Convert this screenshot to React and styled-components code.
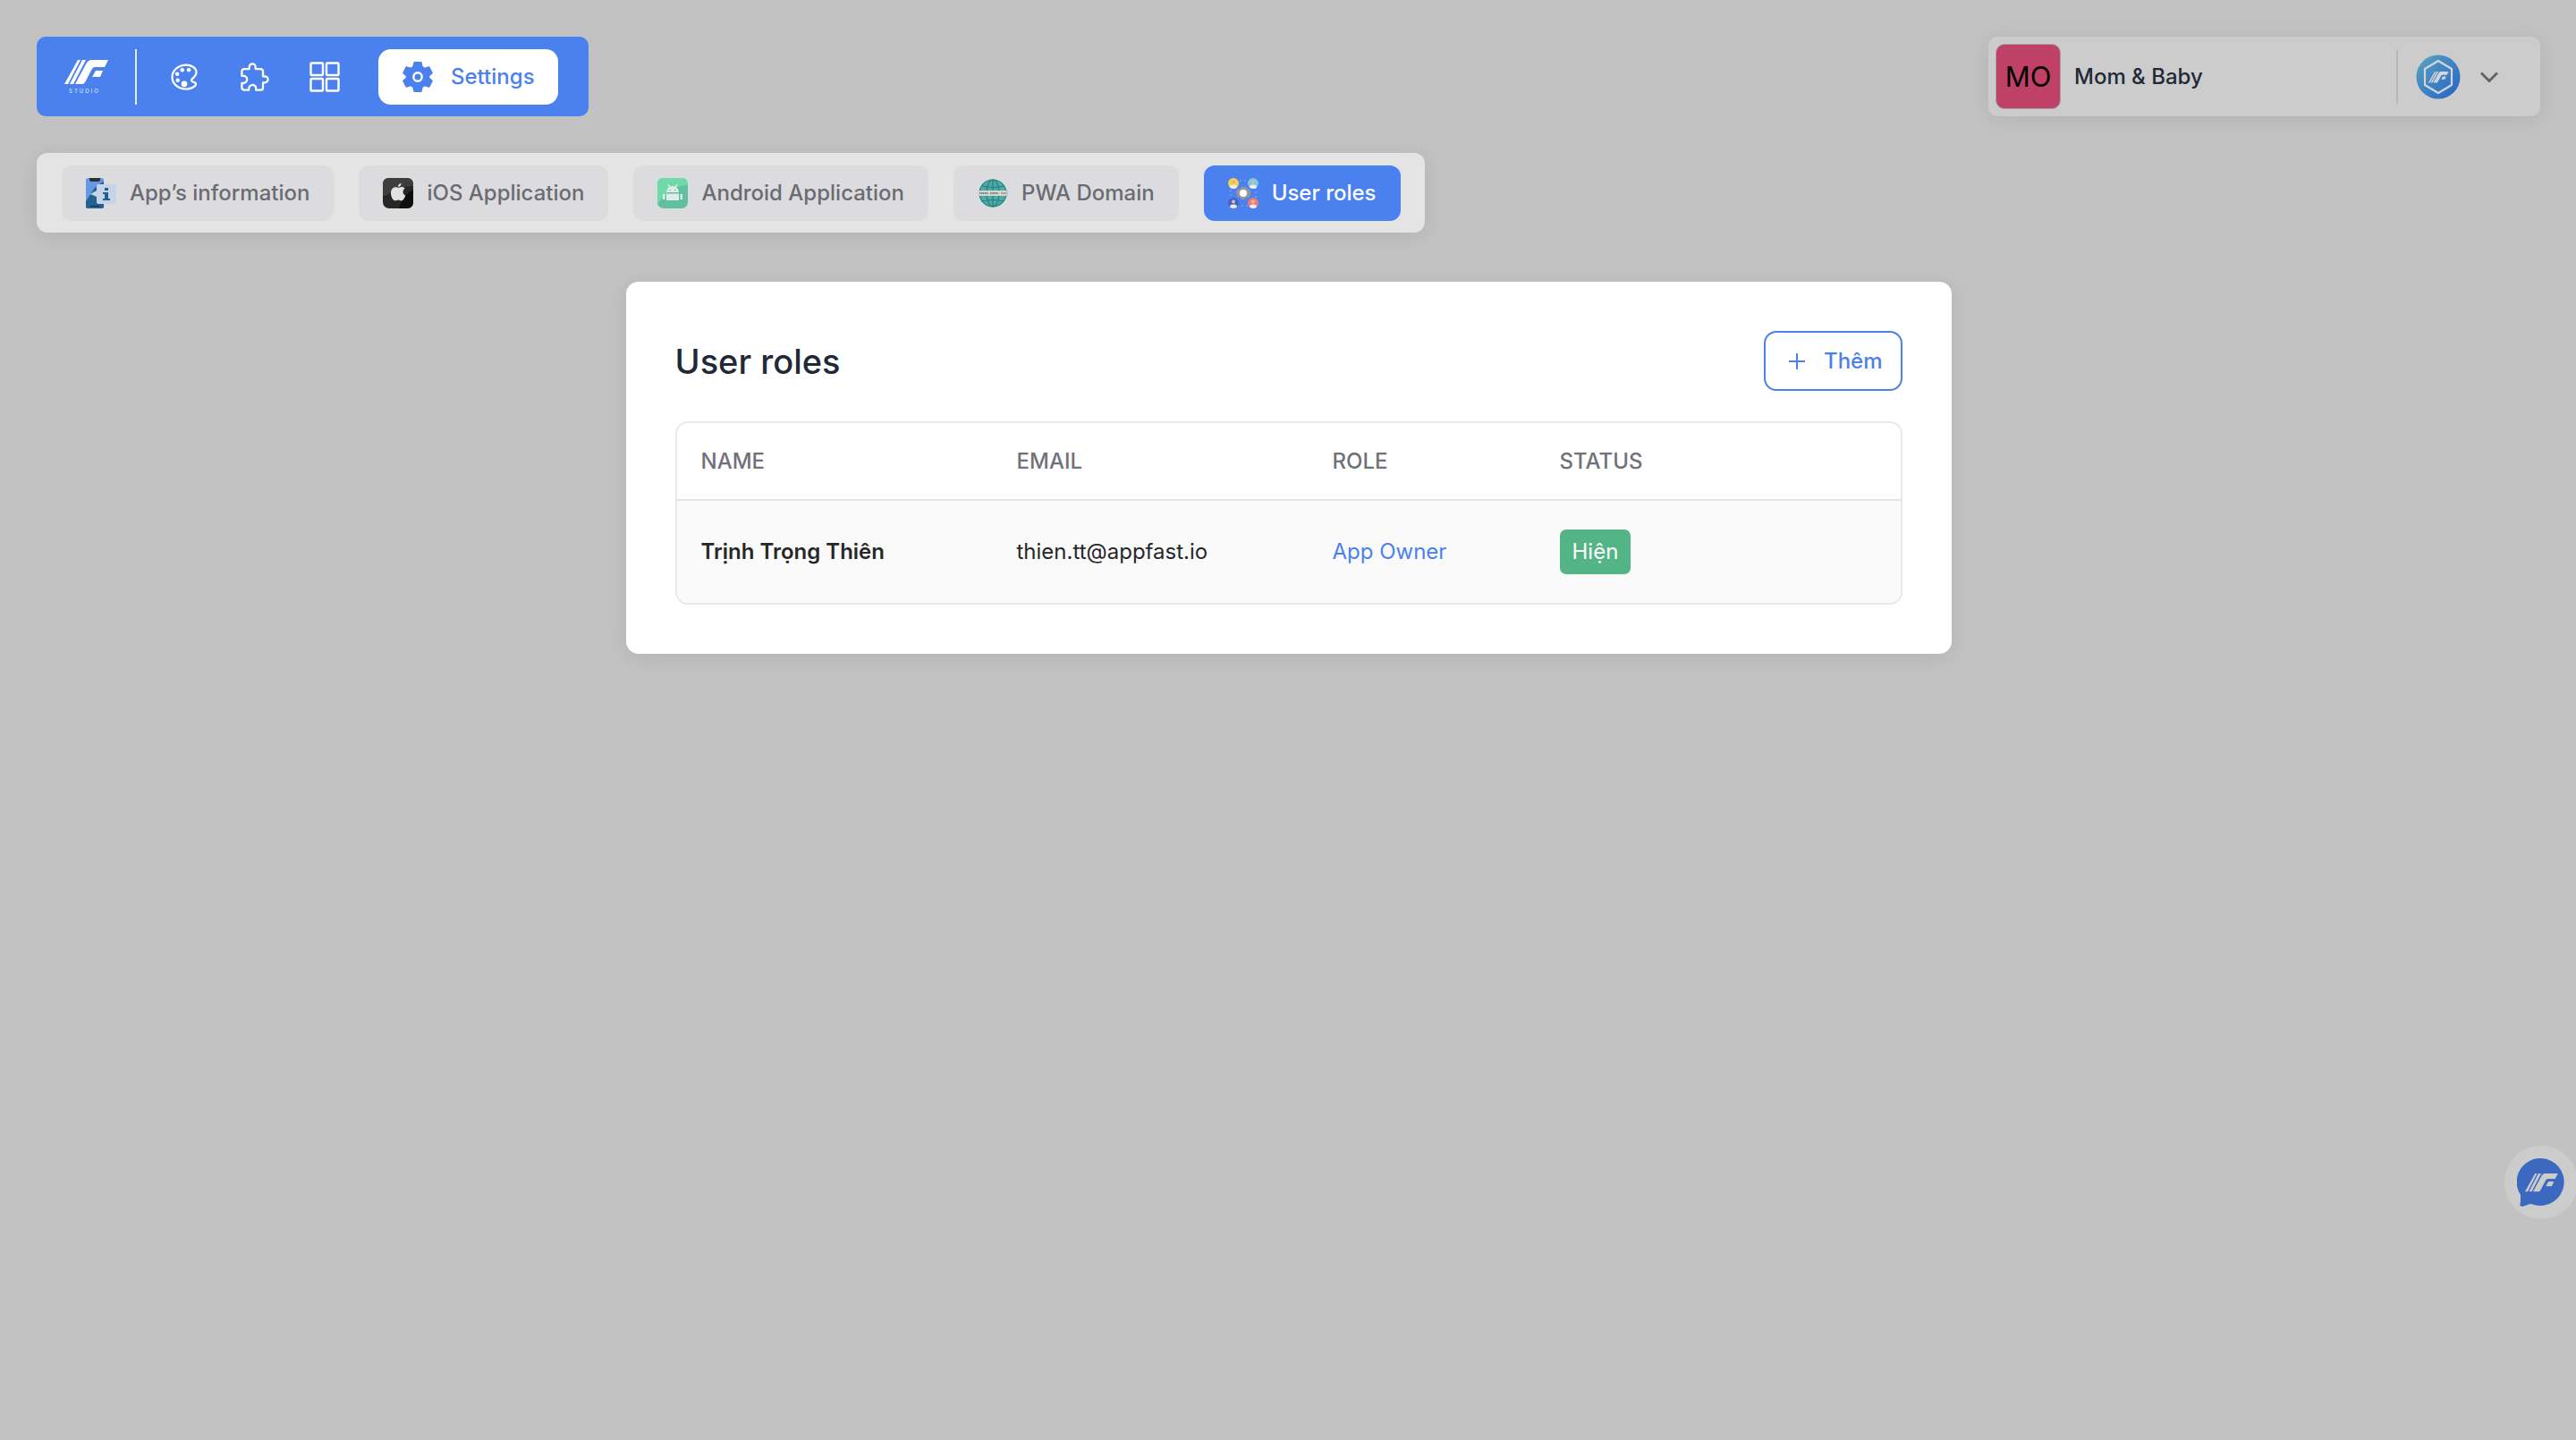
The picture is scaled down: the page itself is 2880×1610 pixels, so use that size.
import React from "react";
import styled, { createGlobalStyle } from "styled-components";
import { IoColorPaletteOutline, IoExtensionPuzzleOutline } from "react-icons/io5";

const GlobalStyle = createGlobalStyle`
  *, *::before, *::after { box-sizing: border-box; }
  body {
    margin: 0;
    background: #c2c2c2;
    color: #1f2937;
    font-family: Inter, "Noto Sans", sans-serif;
    font-size: 24px;
    line-height: 36px;
  }
  button { font: inherit; border: 0; background: none; padding: 0; cursor: pointer; }
  a { text-decoration: none; color: inherit; }
  svg { display: block; flex: none; }
`;

const Page = styled.div`
  min-height: 100vh;
  padding: 41px 40px 41px 41px;
`;

const TopBar = styled.header`
  display: flex;
  justify-content: space-between;
  align-items: center;
`;

const MainNav = styled.nav`
  display: flex;
  align-items: center;
  height: 89px;
  padding: 0 34px 0 28px;
  border-radius: 10px;
  background: #4a81ee;
  color: #fff;
`;

const LogoLink = styled.a`
  display: flex;
  padding: 0 28px 0 0;
`;

const Divider = styled.span`
  width: 2px;
  height: 62px;
  background: ${(p) => p.$color};
`;

const NavIcons = styled.div`
  display: flex;
  align-items: center;
  gap: 43px;
  padding: 0 43px 0 35px;
`;

const IconButton = styled.button`
  display: grid;
  place-items: center;
  color: #fff;
`;

const SettingsLink = styled.a`
  display: flex;
  align-items: center;
  gap: 20px;
  height: 62px;
  padding: 0 26px 0 27px;
  border-radius: 14px;
  background: #fff;
  color: #4a81ee;
  font-weight: 500;
`;

const AccountBar = styled.div`
  display: flex;
  align-items: center;
  width: 617px;
  height: 89px;
  padding: 0 45px 0 8px;
  border-radius: 10px;
  background: #cccccc;
  box-shadow: 0 4px 24px rgba(0, 0, 0, 0.08);
`;

const AppBadge = styled.span`
  display: grid;
  place-items: center;
  width: 73px;
  height: 73px;
  border: 1px solid #a3a3a8;
  border-radius: 10px;
  background: #bf4167;
  color: #000;
  font-size: 31px;
`;

const AppName = styled.span`
  flex: 1;
  padding-left: 15px;
  font-weight: 500;
`;

const AccountButton = styled.button`
  display: flex;
  align-items: center;
  gap: 20px;
  padding-left: 20px;
  color: #64646c;
`;

const TabBar = styled.nav`
  display: flex;
  align-items: center;
  gap: 28px;
  width: fit-content;
  height: 89px;
  margin-top: 41px;
  padding: 0 27px 0 28px;
  border-radius: 12px;
  background: #e4e4e4;
  box-shadow: 0 4px 24px rgba(0, 0, 0, 0.08);
`;

const Tab = styled.a`
  display: flex;
  align-items: center;
  gap: 15px;
  height: 62px;
  padding: 0 27px;
  border-radius: 12px;
  background: ${(p) => (p.$active ? "#4a81ee" : "#dcdcde")};
  color: ${(p) => (p.$active ? "#fff" : "#6b6b74")};
  font-weight: 500;
`;

const Card = styled.main`
  width: 100%;
  max-width: 1482px;
  margin: 55px auto 0;
  padding: 55px;
  border-radius: 14px;
  background: #fff;
  box-shadow: 0 4px 24px rgba(0, 0, 0, 0.08);
`;

const CardHeader = styled.div`
  display: flex;
  justify-content: space-between;
  align-items: center;
  margin-bottom: 34px;
`;

const Title = styled.h1`
  margin: 0;
  font-size: 38px;
  line-height: 48px;
  font-weight: 500;
`;

const AddButton = styled.button`
  display: flex;
  align-items: center;
  gap: 20px;
  height: 67px;
  padding: 0 20px 0 25px;
  border: 2px solid #4a81ee;
  border-radius: 14px;
  color: #4a81ee;
  font-weight: 500;
`;

const TableFrame = styled.div`
  border: 2px solid #e9e9ec;
  border-radius: 14px;
  overflow: hidden;
`;

const Table = styled.table`
  width: 100%;
  table-layout: fixed;
  border-collapse: collapse;
  text-align: left;
`;

const HeadCell = styled.th`
  width: ${(p) => p.$width};
  height: 86px;
  padding: 0 27px;
  border-bottom: 2px solid #e5e5e9;
  color: #71717a;
  font-weight: 500;
`;

const Cell = styled.td`
  height: 115px;
  padding: 0 27px;
  background: #fafafa;
  color: ${(p) => p.$color || "#27272a"};
  font-weight: ${(p) => (p.$strong ? 600 : 400)};
`;

const Status = styled.span`
  display: inline-block;
  padding: 7px 14px;
  border-radius: 7px;
  background: #53b586;
  color: #fff;
`;

const ChatButton = styled.button`
  position: fixed;
  right: -2px;
  bottom: 247px;
  display: grid;
  place-items: center;
  width: 82px;
  height: 82px;
  border-radius: 50%;
  background: #cccccc;
`;

const MarkShape = () => (
  <>
    <path d="M15 0h3L4 27H0z" />
    <path d="M20 0h4L10 27H6z" />
    <path d="M30 0h19l-4 8H34q-2 0-3 2l-8 15q-1 2-3 2h-8L25 3q2-3 5-3z" />
    <path d="M35 12h8l-3 7h-9z" />
  </>
);

const LogoText = styled.text`
  font: 500 6px Inter, sans-serif;
  letter-spacing: 2px;
`;

const Logo = () => (
  <svg width="54" height="40" viewBox="0 0 54 40" fill="#fff" role="img" aria-label="Studio">
    <g transform="translate(3 1)"><MarkShape /></g>
    <LogoText x="8" y="38" opacity=".75">STUDIO</LogoText>
  </svg>
);

const GridIcon = () => (
  <svg width="34" height="34" viewBox="0 0 34 34" fill="none" stroke="#fff" strokeWidth="2.4">
    <rect x="1.5" y="1.5" width="13.5" height="13.5" rx="1" />
    <rect x="19" y="1.5" width="13.5" height="13.5" rx="1" />
    <rect x="1.5" y="19" width="13.5" height="13.5" rx="1" />
    <rect x="19" y="19" width="13.5" height="13.5" rx="1" />
  </svg>
);

const GearIcon = () => (
  <svg width="34" height="34" viewBox="0 0 34 34">
    <path fill="#4a81ee" stroke="#4a81ee" strokeWidth="2.5" strokeLinejoin="round" d="M13.500 1.300h7l1 4.700 3.500 2 4.500-1.500 3 6-3.500 3v3l3.500 3-3 6-4.500-1.500-3.500 2-1 4.700h-7l-1-4.700-3.500-2-4.500 1.500-3-6 3.500-3v-3l-3.500-3 3-6L9 8l3.500-2z" />
    <circle cx="17" cy="17" r="4.700" fill="none" stroke="#fff" strokeWidth="2.400" />
  </svg>
);

const InfoIcon = () => (
  <svg width="34" height="34" viewBox="0 0 34 34">
    <rect width="20" height="34" rx="2.500" fill="#659ae2" />
    <path d="M20 4C8 9 5 20 0 26v6q0 2 2 2h16q2 0 2-2z" fill="#23618f" />
    <path d="M4 0h12v2q0 2-2 2H6Q4 4 4 2z" fill="#2b2f38" />
    <path d="M5 31h10v1H5z" fill="#172a45" />
    <path d="M14 7h18q2 0 2 2v18q0 2-2 2H14q-2 0-2-2v-6l-7-3 7-4V9q0-2 2-2z" fill="#c6d3e8" />
    <path d="M21 11h4v3h-4zM19 16h6v7h2v2h-8v-2h2v-5h-2z" fill="#23618f" />
  </svg>
);

const AppleIcon = () => (
  <svg width="34" height="34" viewBox="0 0 34 34">
    <rect width="34" height="34" rx="7" fill="#262626" />
    <path d="M7 0h20q7 0 7 7v2Q18 8 3 20H0V7q0-7 7-7z" fill="#3e3e3e" />
    <path d="M34 13v14q0 7-7 7h-9q3-14 16-21z" fill="#0e0e0e" />
    <path fill="#e2e2e2" d="M17.500 11c1-.1 2-1.200 4-1 1.500.1 2.500.9 3.200 1.800-3.200 2-2.700 6.500.6 7.900-.8 2.300-2.600 5.700-4.700 5.700-1.400 0-1.800-.8-3.400-.8s-2.100.8-3.400.8C11.300 25.400 9 20.900 9 17.100c0-4.500 2.700-6.800 5.200-6.800 1.400 0 2.500.7 3.300.7zM17 10c-.2-2.300 1.500-4 3.500-4.300C20.800 8 19.200 9.800 17 10z" />
  </svg>
);

const AndroidIcon = () => (
  <svg width="34" height="34" viewBox="0 0 34 34">
    <rect width="34" height="34" rx="7" fill="#5fbf9e" />
    <path d="M7 0h20q7 0 7 7v1Q14 9 2 27l-2 1V7q0-7 7-7z" fill="#6fd9a8" />
    <path fill="#e0ece7" d="M10 16a7 7 0 0 1 14 0zM10 17.500h14V25H10zM6 18h2.500v6H6zM25.500 18H28v6h-2.500z" />
    <path d="M12 7l2 4M22 7l-2 4" stroke="#e0ece7" strokeWidth="1.200" />
    <path d="M13.500 13h1.500v1h-1.500zM19 13h1.500v1H19z" fill="#5fbf9e" />
  </svg>
);

const GlobeIcon = () => (
  <svg width="34" height="34" viewBox="0 0 34 34">
    <circle cx="17" cy="17" r="15" fill="#4aada8" />
    <g fill="none" stroke="#2c7c80" strokeWidth="1.200">
      <circle cx="17" cy="17" r="15" />
      <ellipse cx="17" cy="17" rx="7" ry="15" />
      <path d="M17 2v30M5 9q12 3 24 0M5 26q12-3 24 0" />
    </g>
    <rect y="14" width="34" height="6" rx="1" fill="#d5d5d5" />
    <path d="M2 17h10M14 17h9" stroke="#666" strokeWidth="1.600" strokeDasharray="1.500 .5" />
    <path d="M26 17h6" stroke="#e0885c" strokeWidth="1.600" />
    <path d="M33 14v6" stroke="#9ccbe0" strokeWidth="1.600" />
  </svg>
);

const Person = ({ x, y, fill, skin }) => (
  <g transform={`translate(${x} ${y})`}>
    <circle r="6" fill={fill} />
    <circle cy="-1.500" r="2" fill={skin} />
    <path d="M-4 4.500Q-4 1.500 0 1.500T4 4.500Q0 7.500-4 4.500z" fill="#f3ebe6" />
  </g>
);

const RolesIcon = () => (
  <svg width="34" height="34" viewBox="0 0 34 34">
    <rect x="3" y="3" width="28" height="28" fill="none" stroke="#86aaf2" strokeDasharray="2 3" />
    <Person x={6} y={6} fill="#f8cf48" skin="#e9b28a" />
    <Person x={28} y={6} fill="#7cc8dc" skin="#d9b8ae" />
    <Person x={6} y={28} fill="#4264c8" skin="#e6b8b0" />
    <Person x={28} y={28} fill="#ea7b77" skin="#f2b7a4" />
    <path d="M15 10h5l1 2 3 .5 1.500 4-2 5-3 .5-2 2h-4l-1-2-3-1-1.500-4.500 1.500-4 3-.5z" fill="#96979d" />
    <circle cx="17" cy="17" r="4" fill="#fff" />
  </svg>
);

const AvatarIcon = () => (
  <svg width="50" height="50" viewBox="0 0 50 50">
    <defs>
      <linearGradient id="avatar" x1="0" y1="0" x2="1" y2="1">
        <stop offset="0" stopColor="#5ba3bf" />
        <stop offset="1" stopColor="#2463c6" />
      </linearGradient>
    </defs>
    <circle cx="25" cy="25" r="24.500" fill="url(#avatar)" />
    <path d="M25 7l15 9v18l-15 9-15-9V16z" fill="none" stroke="#d0d6dc" strokeWidth="2.200" strokeLinejoin="round" />
    <g fill="#d0d6dc" transform="translate(14 19) scale(.46)"><MarkShape /></g>
  </svg>
);

const ChevronIcon = () => (
  <svg width="24" height="24" viewBox="0 0 24 24" fill="none" stroke="currentColor" strokeWidth="3">
    <path d="M3 7.500l9 9 9-9" />
  </svg>
);

const PlusIcon = () => (
  <svg width="20" height="20" viewBox="0 0 20 20" stroke="currentColor" strokeWidth="2">
    <path d="M10 1v18M1 10h18" />
  </svg>
);

const ChatIcon = () => (
  <svg width="54" height="56" viewBox="0 0 54 56">
    <path d="M27 1a26.500 26.500 0 1 1-8 52l-3-1q-2 0-4 1l-6 2q-4 0-2-5V42A26.500 26.500 0 0 1 27 1z" fill="#3b69c0" />
    <g fill="#ccc" transform="translate(9 18) scale(.75)"><MarkShape /></g>
  </svg>
);

const tabs = [
  { label: "App’s information", Icon: InfoIcon },
  { label: "iOS Application", Icon: AppleIcon },
  { label: "Android Application", Icon: AndroidIcon },
  { label: "PWA Domain", Icon: GlobeIcon },
  { label: "User roles", Icon: RolesIcon, active: true },
];

const users = [
  { name: "Trịnh Trọng Thiên", email: "thien.tt@appfast.io", role: "App Owner", status: "Hiện" },
];

export default function App() {
  return (
    <Page>
      <GlobalStyle />
      <TopBar>
        <MainNav aria-label="Main">
          <LogoLink href="#"><Logo /></LogoLink>
          <Divider $color="#e4ecfd" />
          <NavIcons>
            <IconButton aria-label="Design"><IoColorPaletteOutline size={36} /></IconButton>
            <IconButton aria-label="Extensions"><IoExtensionPuzzleOutline size={36} /></IconButton>
            <IconButton aria-label="Modules"><GridIcon /></IconButton>
          </NavIcons>
          <SettingsLink href="#settings"><GearIcon />Settings</SettingsLink>
        </MainNav>
        <AccountBar>
          <AppBadge>MO</AppBadge>
          <AppName>Mom &amp; Baby</AppName>
          <Divider $color="#b6b6bd" />
          <AccountButton aria-label="Account menu"><AvatarIcon /><ChevronIcon /></AccountButton>
        </AccountBar>
      </TopBar>
      <TabBar aria-label="Settings sections">
        {tabs.map(({ label, Icon, active }) => (
          <Tab key={label} href="#" $active={active} aria-current={active ? "page" : undefined}>
            <Icon />{label}
          </Tab>
        ))}
      </TabBar>
      <Card>
        <CardHeader>
          <Title>User roles</Title>
          <AddButton><PlusIcon />Thêm</AddButton>
        </CardHeader>
        <TableFrame>
          <Table>
            <thead>
              <tr>
                <HeadCell scope="col" $width="353px">NAME</HeadCell>
                <HeadCell scope="col" $width="353px">EMAIL</HeadCell>
                <HeadCell scope="col" $width="254px">ROLE</HeadCell>
                <HeadCell scope="col">STATUS</HeadCell>
              </tr>
            </thead>
            <tbody>
              {users.map((user) => (
                <tr key={user.email}>
                  <Cell $strong>{user.name}</Cell>
                  <Cell>{user.email}</Cell>
                  <Cell $color="#4a81ee">{user.role}</Cell>
                  <Cell><Status>{user.status}</Status></Cell>
                </tr>
              ))}
            </tbody>
          </Table>
        </TableFrame>
      </Card>
      <ChatButton aria-label="Open chat"><ChatIcon /></ChatButton>
    </Page>
  );
}
